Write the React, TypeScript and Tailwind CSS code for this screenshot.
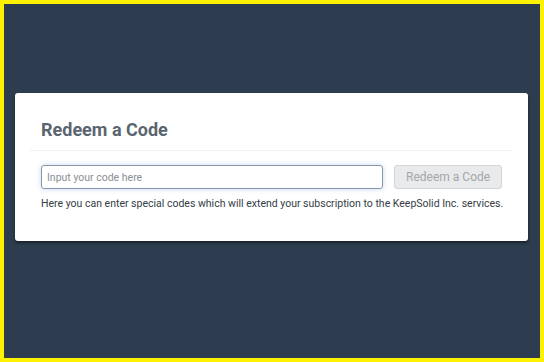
export default function App() {
  return (
    <div className="h-[362px] w-[544px] border-4 border-[#fff200] bg-[#2d3d4f] pt-[89px] pl-[11px] font-['Roboto',sans-serif]">
      <div className="w-[513px] h-[148px] rounded-[3px] bg-white px-[15px] shadow-[0_2px_3px_rgba(0,0,0,0.5)]">
        <div className="border-b border-[#f0f2f4] px-[11px] pt-[28px] pb-[12px]">
          <h1 className="text-[18px] font-bold leading-[17px] text-[#5a6570]">Redeem a Code</h1>
        </div>
        <div className="px-[11px] pt-[14px]">
          <div className="flex items-center gap-[11px]">
            <input
              className="h-[24px] w-[343px] rounded-[3px] border border-[#8a97a4] px-[5px] text-[10.5px] text-[#333] shadow-[0_0_5px_rgba(120,170,230,0.45)] outline-none placeholder:text-[#8a8f94]"
              placeholder="Input your code here"
            />
            <button className="h-[24px] w-[108px] rounded-[3px] border border-[#d3d6d9] bg-[#e9eaeb] text-[12px] text-[#a3a7ab]">
              Redeem a Code
            </button>
          </div>
          <p className="mt-[8px] whitespace-nowrap text-[10.5px] leading-[13px] text-[#343d46]">
            Here you can enter special codes which will extend your subscription to the KeepSolid Inc. services.
          </p>
        </div>
      </div>
    </div>
  );
}
